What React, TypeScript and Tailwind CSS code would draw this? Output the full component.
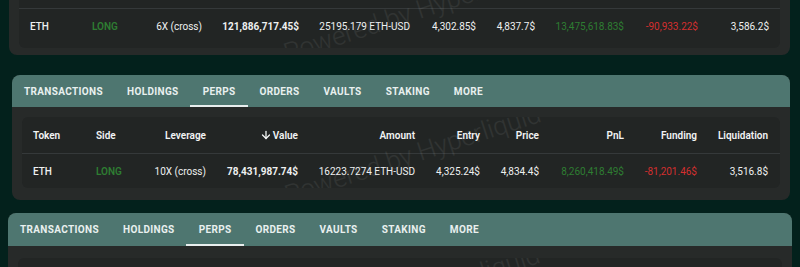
import React from "react";
import { ArrowDown } from "lucide-react";

const TABS = ["TRANSACTIONS", "HOLDINGS", "PERPS", "ORDERS", "VAULTS", "STAKING", "MORE"];

type Row = {
  token: string;
  side: string;
  lev: string;
  value: string;
  amount: string;
  entry: string;
  price: string;
  pnl: string;
  funding: string;
  liq: string;
};

function Tabs({ h }: { h: string }) {
  return (
    <div className={`flex items-stretch bg-[#4e7670] ${h}`}>
      {TABS.map((t) => (
        <div
          key={t}
          className="relative flex items-center px-3 text-[10px] font-bold tracking-[0.035em] text-[#e9f0ef]"
        >
          {t}
          {t === "PERPS" && (
            <span className="absolute bottom-0 -left-[1px] -right-[1px] h-[2px] bg-[#e8eeee]" />
          )}
        </div>
      ))}
    </div>
  );
}

function Watermark() {
  return (
    <div className="pointer-events-none absolute inset-0 flex items-center justify-center">
      <span className="ml-[24px] mt-[4px] -rotate-[18deg] whitespace-nowrap text-[26px] font-light text-white/[0.07]">
        Powered by Hyperliquid
      </span>
    </div>
  );
}

function Table({
  cols,
  row,
  padX,
  extra,
}: {
  cols: string;
  row: Row;
  padX: string;
  extra: string;
}) {
  const headers = [
    "Token",
    "Side",
    "Leverage",
    "Value",
    "Amount",
    "Entry",
    "Price",
    "PnL",
    "Funding",
    "Liquidation",
  ];
  return (
    <div className={`relative overflow-hidden rounded-md bg-[#222524] ${extra}`}>
      <Watermark />
      <div
        className={`grid h-[37px] items-center border-b border-[#35393a] text-[10px] font-semibold text-[#f2f4f4] ${cols} ${padX}`}
      >
        {headers.map((h, i) =>
          h === "Value" ? (
            <div key={h} className="flex items-center justify-end gap-[1px]">
              <ArrowDown size={12} strokeWidth={2.6} />
              <span>Value</span>
            </div>
          ) : (
            <div key={h} className={i < 2 ? "text-left" : "text-right"}>
              {h}
            </div>
          )
        )}
      </div>
      <div className={`grid h-[34px] items-center text-[10px] text-[#eef0f0] ${cols} ${padX}`}>
        <div className="font-medium">{row.token}</div>
        <div className="font-semibold text-[#2e7d32]">{row.side}</div>
        <div className="text-right">{row.lev}</div>
        <div className="text-right font-bold">{row.value}</div>
        <div className="text-right">{row.amount}</div>
        <div className="text-right">{row.entry}</div>
        <div className="text-right">{row.price}</div>
        <div className="text-right text-[#2e7d32]">{row.pnl}</div>
        <div className="text-right text-[#d32f2f]">{row.funding}</div>
        <div className="text-right">{row.liq}</div>
      </div>
    </div>
  );
}

export default function App() {
  const row1: Row = {
    token: "ETH",
    side: "LONG",
    lev: "6X (cross)",
    value: "121,886,717.45$",
    amount: "25195.179 ETH-USD",
    entry: "4,302.85$",
    price: "4,837.7$",
    pnl: "13,475,618.83$",
    funding: "-90,933.22$",
    liq: "3,586.2$",
  };
  const row2: Row = {
    token: "ETH",
    side: "LONG",
    lev: "10X (cross)",
    value: "78,431,987.74$",
    amount: "16223.7274 ETH-USD",
    entry: "4,325.24$",
    price: "4,834.4$",
    pnl: "8,260,418.49$",
    funding: "-81,201.46$",
    liq: "3,516.8$",
  };
  return (
    <div
      className="h-[267px] w-[800px] overflow-hidden bg-[#03211c]"
      style={{ fontFamily: "Roboto, 'Liberation Sans', sans-serif" }}
    >
      {/* Card 1 (scrolled, top cut off) */}
      <div className="-mt-[70px] ml-[9px] mr-[10px] overflow-hidden rounded-lg bg-[#272a29]">
        <Tabs h="h-[32px]" />
        <div className="px-[10px] pb-[7px] pt-[10px]">
          <Table
            cols="grid-cols-[62px_55px_55px_97px_111px_66px_59px_89px_74px_71px]"
            padX="pl-[11px] pr-[11px]"
            extra="pb-[5px]"
            row={row1}
          />
        </div>
      </div>

      {/* Card 2 */}
      <div className="ml-[12px] mr-[10px] mt-[20px] overflow-hidden rounded-lg bg-[#272a29]">
        <Tabs h="h-[32px]" />
        <div className="px-[10px] pb-[12px] pt-[10px]">
          <Table
            cols="grid-cols-[63px_53px_57px_92px_117px_65px_59px_85px_73px_71px]"
            padX="pl-[11px] pr-[12px]"
            extra=""
            row={row2}
          />
        </div>
      </div>

      {/* Card 3 */}
      <div className="ml-[8px] mr-[8px] mt-[13px] overflow-hidden rounded-lg bg-[#272a29]">
        <Tabs h="h-[33px]" />
        <div className="px-[10px] pb-[12px] pt-[12px]">
          <Table
            cols="grid-cols-[63px_53px_57px_92px_117px_65px_59px_85px_73px_71px]"
            padX="pl-[11px] pr-[12px]"
            extra=""
            row={row2}
          />
        </div>
      </div>
    </div>
  );
}
